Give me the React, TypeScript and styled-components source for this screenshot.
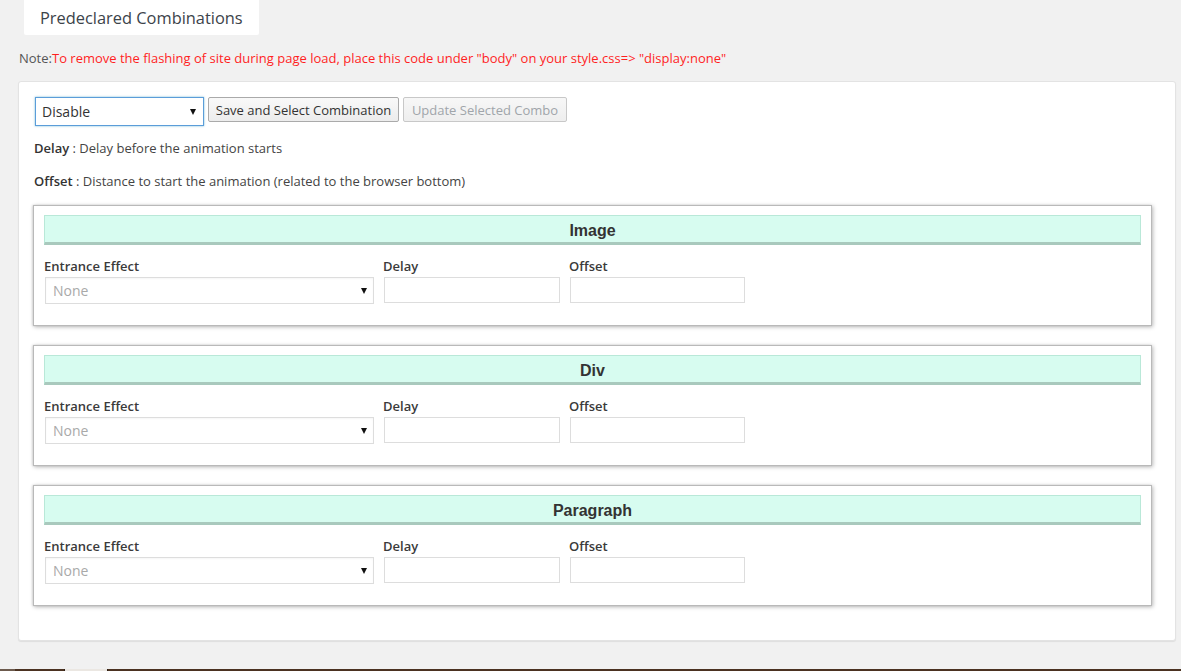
import styled, { createGlobalStyle } from "styled-components";

const GlobalStyle = createGlobalStyle`
    html, body {
        margin: 0;
        padding: 0;
        background: #f1f1f1;
        font-family: "Open Sans", "Liberation Sans", sans-serif;
        color: #444;
        height: 671px;
        overflow: hidden;
    }
`;

type Section = { title: string };

const sections: Section[] = [
    { title: "Image" },
    { title: "Div" },
    { title: "Paragraph" },
];

const Page = styled.div`
    padding: 0 5px 0 18px;
`;

const Tab = styled.div`
    margin-left: 6px;
    width: 235px;
    height: 35px;
    box-sizing: border-box;
    padding: 0 0 0 16px;
    background: #fff;
    font-size: 16.4px;
    line-height: 35px;
    white-space: nowrap;
    color: #3c434a;
    border-radius: 0 0 2px 2px;
`;

const Note = styled.p`
    margin: 15px 0 0 1px;
    font-size: 13px;
    line-height: 17px;
    color: #555;

    span {
        color: #ff1f1f;
    }
`;

const Panel = styled.div`
    margin-top: 14px;
    height: 560px;
    box-sizing: border-box;
    padding: 15px 23px 0 14px;
    background: #fff;
    border: 1px solid #e3e3e3;
    border-radius: 3px;
    box-shadow: 0 1px 1px rgba(0, 0, 0, 0.08);
`;

const Toolbar = styled.div`
    display: flex;
    align-items: flex-start;
    gap: 4px;
    padding-left: 2px;
`;

const SelectBox = styled.div<{ $width: number; $height: number; $focused?: boolean; $muted?: boolean; $pad: number }>`
    display: flex;
    align-items: center;
    justify-content: space-between;
    box-sizing: border-box;
    width: ${p => p.$width}px;
    height: ${p => p.$height}px;
    padding: 0 ${p => p.$pad - 1}px 0 ${p => (p.$focused ? 6 : 7)}px;
    border: 1px solid ${p => (p.$focused ? "#5b9dd9" : "#ddd")};
    box-shadow: ${p => (p.$focused ? "0 0 2px rgba(30, 140, 190, 0.6)" : "inset 0 1px 2px rgba(0,0,0,0.04)")};
    background: #fff;
    font-size: 14px;
    color: ${p => (p.$muted ? "#a9a9a9" : "#333")};
    flex: none;
`;

const Button = styled.button<{ $width: number }>`
    width: ${p => p.$width}px;
    height: 25px;
    padding: 0;
    font-family: "Open Sans", "Liberation Sans", sans-serif;
    font-size: 13px;
    color: #333;
    background: linear-gradient(#f9f9f9, #ececec);
    border: 1px solid #aaa;
    border-radius: 2px;

    &:disabled {
        color: #a0a5aa;
        border-color: #c8c8c8;
        background: linear-gradient(#f7f7f7, #eeeeee);
    }
`;

const Info = styled.p`
    margin: 12px 0 0 1px;
    font-size: 13px;
    line-height: 20px;
    color: #444;

    & + & {
        margin-top: 13px;
    }

    b {
        font-weight: 600;
        color: #333;
    }
`;

const Boxes = styled.div`
    display: flex;
    flex-direction: column;
    gap: 19px;
    margin-top: 14px;
`;

const Box = styled.div`
    height: 121px;
    box-sizing: border-box;
    padding: 9px 10px 0 10px;
    background: #fff;
    border: 1px solid #b9b9b9;
    box-shadow: 1px 1px 4px rgba(0, 0, 0, 0.28), -1px 0 2px rgba(0, 0, 0, 0.1);
`;

const BoxHeader = styled.div`
    height: 30px;
    box-sizing: border-box;
    background: #d7fcf0;
    border: 1px solid #b9e8d8;
    border-bottom: 3px solid #a9c9bd;
    text-align: center;
    font-family: "Liberation Sans", Arial, sans-serif;
    font-weight: bold;
    font-size: 16px;
    line-height: 29px;
    color: #333;
`;

const Fields = styled.div`
    display: flex;
    gap: 9px;
    margin-top: 13px;
`;

const Field = styled.div`
    display: flex;
    flex-direction: column;
    gap: 3px;
`;

const Label = styled.label`
    font-size: 13px;
    font-weight: 600;
    line-height: 16px;
    color: #3a3a3a;
`;

const TextInput = styled.div<{ $width: number }>`
    width: ${p => p.$width}px;
    height: 26px;
    box-sizing: border-box;
    margin-left: 1px;
    border: 1px solid #ddd;
    background: #fff;
`;

const Footer = styled.div`
    display: flex;
    margin-top: 28px;
    height: 4px;
    background: #4b3221;

    span:first-child {
        width: 15px;
        background: #6c5a4d;
    }

    span:nth-child(2) {
        width: 42px;
        margin-left: 49px;
        background: #ebe7e2;
        border-left: 1px solid #2e1f14;
        border-right: 1px solid #2e1f14;
    }
`;

const Arrow = () => (
    <svg width="6" height="7" viewBox="0 0 6 7">
        <path d="M0 1 L6 1 L3 7 Z" fill="#111" />
    </svg>
);

const SectionBox = ({ title }: Section) => (
    <Box>
        <BoxHeader>{title}</BoxHeader>
        <Fields>
            <Field>
                <Label>Entrance Effect</Label>
                <SelectBox $width={329} $height={27} $muted $pad={7} style={{ marginLeft: 1 }}>
                    <span>None</span>
                    <Arrow />
                </SelectBox>
            </Field>
            <Field>
                <Label>Delay</Label>
                <TextInput $width={176} />
            </Field>
            <Field>
                <Label>Offset</Label>
                <TextInput $width={175} />
            </Field>
        </Fields>
    </Box>
);

export default function App() {
    return (
        <>
            <GlobalStyle />
            <Page>
                <Tab>Predeclared Combinations</Tab>
                <Note>
                    Note:<span>To remove the flashing of site during page load, place this code under "body" on your style.css=&gt; "display:none"</span>
                </Note>
                <Panel>
                    <Toolbar>
                        <SelectBox $width={169} $height={29} $focused $pad={8}>
                            <span>Disable</span>
                            <Arrow />
                        </SelectBox>
                        <Button $width={191}>Save and Select Combination</Button>
                        <Button $width={164} disabled>Update Selected Combo</Button>
                    </Toolbar>
                    <Info><b>Delay</b> : Delay before the animation starts</Info>
                    <Info><b>Offset</b> : Distance to start the animation (related to the browser bottom)</Info>
                    <Boxes>
                        {sections.map(s => <SectionBox key={s.title} title={s.title} />)}
                    </Boxes>
                </Panel>
            </Page>
            <Footer><span /><span /></Footer>
        </>
    );
}
